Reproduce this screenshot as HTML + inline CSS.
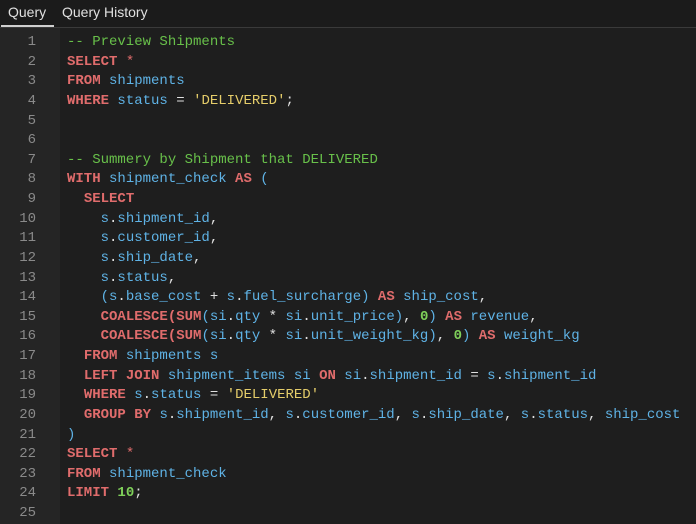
<!DOCTYPE html>
<html><head><meta charset="utf-8"><style>
html,body{margin:0;padding:0;width:696px;height:524px;overflow:hidden;background:#1e1e1e;}
.tabs{height:27px;background:#1b1b1b;border-bottom:1px solid #3a3a3a;position:relative;font-family:"Liberation Sans",sans-serif;font-size:14px;color:#e0e0e0;}
.tab{position:absolute;top:4px;}
.ul{position:absolute;left:1px;top:25px;width:53px;height:2px;background:#d0d0d0;}
.gut{position:absolute;left:0;top:28px;width:60px;height:496px;background:#252525;}
.code{position:absolute;left:0;top:33px;font-family:"Liberation Mono",monospace;font-size:14px;line-height:19.62px;color:#e0e0e0;}
.ln{position:absolute;left:0;width:36px;text-align:right;color:#8a8a8a;}
.tx{position:absolute;left:67px;white-space:pre;}
.k{color:#e06c6c;font-weight:bold}.i{color:#5fb3e6}.s{color:#e5cd6a}.c{color:#68c04a}.n{color:#7fd05a;font-weight:bold}
</style></head><body>
<div class="tabs"><span class="tab" style="left:8px">Query</span><span class="tab" style="left:62px">Query History</span><div class="ul"></div></div>
<div class="gut"></div>
<div class="code">
<div style="position:relative;height:490px;width:696px">
<div class="ln" style="top:0">1<br>2<br>3<br>4<br>5<br>6<br>7<br>8<br>9<br>10<br>11<br>12<br>13<br>14<br>15<br>16<br>17<br>18<br>19<br>20<br>21<br>22<br>23<br>24<br>25</div>
<div class="tx"><span class="c">-- Preview Shipments</span>
<span class="k">SELECT</span> <span class="k" style="font-weight:normal">*</span>
<span class="k">FROM</span> <span class="i">shipments</span>
<span class="k">WHERE</span> <span class="i">status</span> = <span class="s">'DELIVERED'</span>;


<span class="c">-- Summery by Shipment that DELIVERED</span>
<span class="k">WITH</span> <span class="i">shipment_check</span> <span class="k">AS</span> <span class="i">(</span>
  <span class="k">SELECT</span>
    <span class="i">s</span>.<span class="i">shipment_id</span>,
    <span class="i">s</span>.<span class="i">customer_id</span>,
    <span class="i">s</span>.<span class="i">ship_date</span>,
    <span class="i">s</span>.<span class="i">status</span>,
    <span class="i">(s</span>.<span class="i">base_cost</span> + <span class="i">s</span>.<span class="i">fuel_surcharge)</span> <span class="k">AS</span> <span class="i">ship_cost</span>,
    <span class="k">COALESCE(SUM</span><span class="i">(si</span>.<span class="i">qty</span> * <span class="i">si</span>.<span class="i">unit_price)</span>, <span class="n">0</span><span class="i">)</span> <span class="k">AS</span> <span class="i">revenue</span>,
    <span class="k">COALESCE(SUM</span><span class="i">(si</span>.<span class="i">qty</span> * <span class="i">si</span>.<span class="i">unit_weight_kg)</span>, <span class="n">0</span><span class="i">)</span> <span class="k">AS</span> <span class="i">weight_kg</span>
  <span class="k">FROM</span> <span class="i">shipments s</span>
  <span class="k">LEFT JOIN</span> <span class="i">shipment_items si</span> <span class="k">ON</span> <span class="i">si</span>.<span class="i">shipment_id</span> = <span class="i">s</span>.<span class="i">shipment_id</span>
  <span class="k">WHERE</span> <span class="i">s</span>.<span class="i">status</span> = <span class="s">'DELIVERED'</span>
  <span class="k">GROUP BY</span> <span class="i">s</span>.<span class="i">shipment_id</span>, <span class="i">s</span>.<span class="i">customer_id</span>, <span class="i">s</span>.<span class="i">ship_date</span>, <span class="i">s</span>.<span class="i">status</span>, <span class="i">ship_cost</span>
<span class="i">)</span>
<span class="k">SELECT</span> <span class="k" style="font-weight:normal">*</span>
<span class="k">FROM</span> <span class="i">shipment_check</span>
<span class="k">LIMIT</span> <span class="n">10</span>;
</div>
</div></div>
</body></html>
